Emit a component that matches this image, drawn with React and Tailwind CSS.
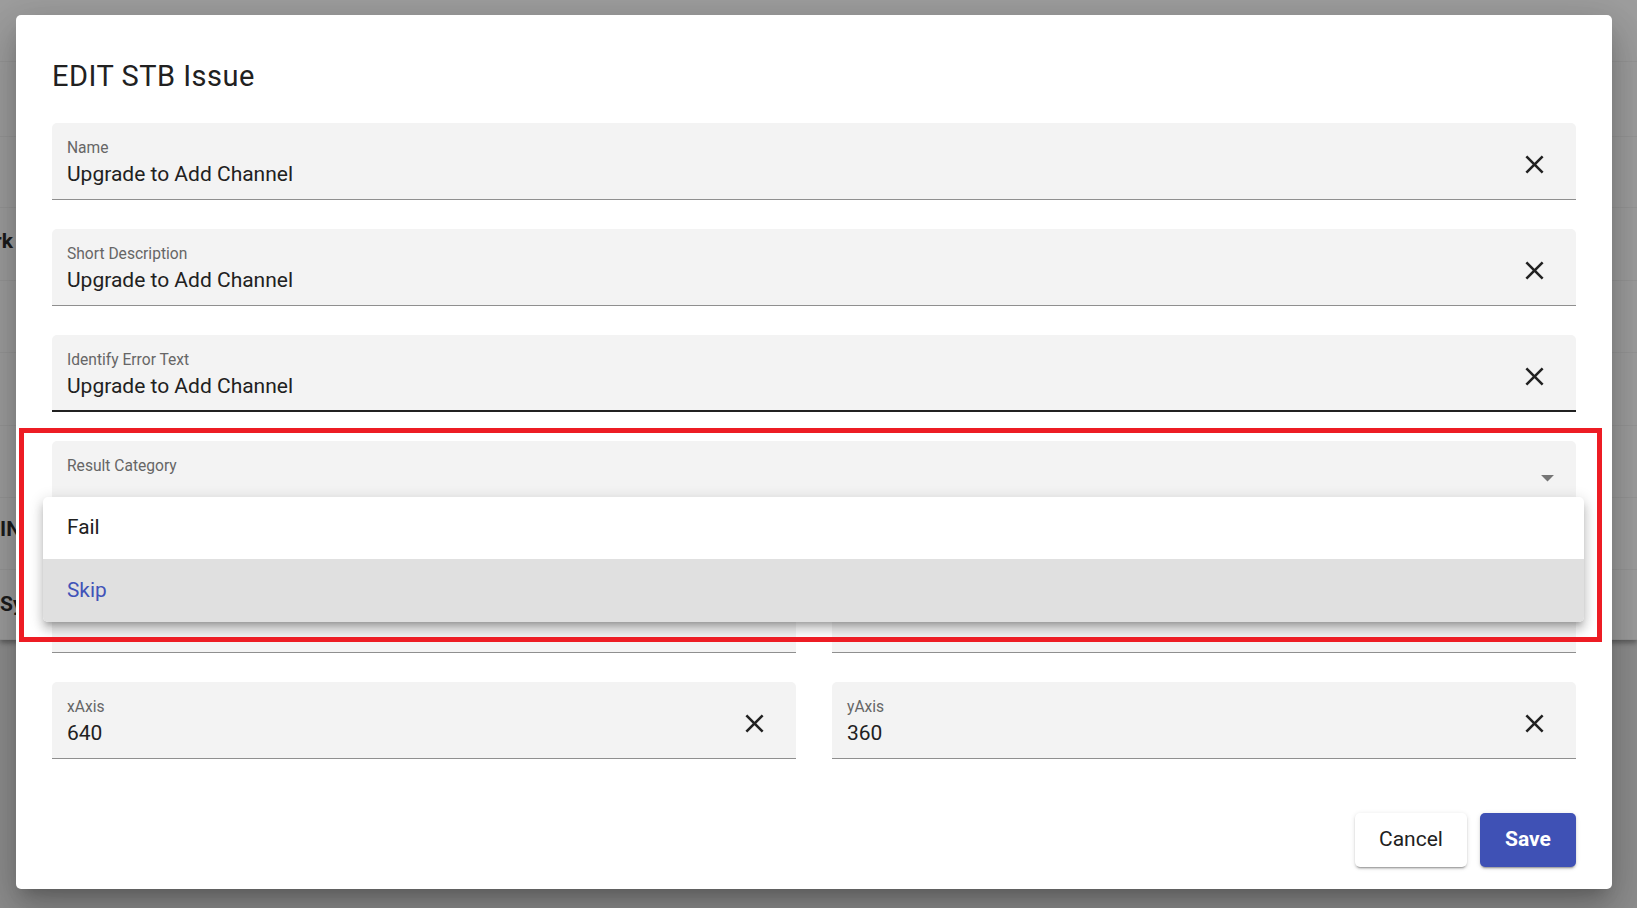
import React from 'react';

const ClearIcon = () => (
  <svg viewBox="0 0 24 24" className="h-[31px] w-[31px] fill-[#212121]">
    <path d="M19 6.41 17.59 5 12 10.59 6.41 5 5 6.41 10.59 12 5 17.59 6.41 19 12 13.41 17.59 19 19 17.59 13.41 12z" />
  </svg>
);

const ArrowDropDown = () => (
  <svg viewBox="0 0 24 24" className="h-[31px] w-[31px] fill-[#757575]">
    <path d="M7 10l5 5 5-5z" />
  </svg>
);

// rows of the page that sits behind the backdrop; only a sliver shows on the left
const BG_ROWS = [
  { h: 'h-[62px]' },
  { h: 'h-[75px]' },
  { h: 'h-[71px]' },
  { h: 'h-[73px]', text: 'Network', align: 'end', pad: 'pb-[5px]' },
  { h: 'h-[72px]' },
  { h: 'h-[73px]' },
  { h: 'h-[72px]' },
  { h: 'h-[72px]', text: 'INFO', align: 'start', pad: 'pb-[7px]' },
  { h: 'h-[70px]', text: 'System', align: 'start', pad: 'pt-[0px]' }
];

const FilledField = ({ label, value, clearable = true, active = false }) => (
  <div
    className={`flex h-[77px] items-start rounded-t-[5px] bg-[#f3f3f3] pl-[15px] pr-[26px] ${
      active ? 'border-b-2 border-[#212121]' : 'border-b border-[#8f8f8f]'
    }`}
  >
    <div className="min-w-0 flex-1 pt-[17px]">
      {label && <p className="text-[15.6px] leading-[16px] text-[#666666]">{label}</p>}
      {value && <p className="mt-[6px] truncate text-[21px] leading-[24px] text-[#212121]">{value}</p>}
    </div>
    {clearable && (
      <div className="mt-[26px] shrink-0">
        <ClearIcon />
      </div>
    )}
  </div>
);

export default function App() {
  return (
    <div className="relative h-[908px] w-[1637px] overflow-hidden bg-[#8e8e8e] font-['Roboto',sans-serif]">
      {/* page behind the backdrop */}
      <div className="flex flex-col bg-[#9e9e9e] shadow-[0_3px_5px_rgba(0,0,0,0.35)]">
        {BG_ROWS.map((row, i) => (
          <div key={i} className={`${row.h} flex items-center border-b border-[#979797]`}>
            {row.text && (
              <div
                className={`flex w-[16px] overflow-hidden ${row.pad} ${
                  row.align === 'end' ? 'justify-end pr-[3px]' : 'justify-start'
                }`}
              >
                <span className="whitespace-nowrap text-[21px] font-bold text-[#1c1c1c]">{row.text}</span>
              </div>
            )}
          </div>
        ))}
      </div>

      {/* Dialog */}
      <div className="absolute left-[16px] top-[15px] h-[874px] w-[1596px] rounded-[5px] bg-white px-[36px] pt-[44px] shadow-[0_11px_15px_-7px_rgba(0,0,0,0.2),0_24px_38px_3px_rgba(0,0,0,0.14),0_9px_46px_8px_rgba(0,0,0,0.12)]">
        <h2 className="text-[29px] font-normal leading-[34px] tracking-[0.5px] text-[#212121]">EDIT STB Issue</h2>

        <div className="mt-[30px] flex flex-col gap-[29px]">
          <FilledField label="Name" value="Upgrade to Add Channel" />
          <FilledField label="Short Description" value="Upgrade to Add Channel" />
          <FilledField label="Identify Error Text" value="Upgrade to Add Channel" active />

          {/* Select */}
          <div className="flex h-[77px] items-start rounded-t-[5px] border-b border-[#8f8f8f] bg-[#f3f3f3] pl-[15px] pr-[13px]">
            <div className="flex-1 pt-[17px]">
              <p className="text-[15.6px] leading-[16px] text-[#666666]">Result Category</p>
            </div>
            <div className="mt-[21px] shrink-0">
              <ArrowDropDown />
            </div>
          </div>

          {/* row hidden under the open menu */}
          <div className="mt-[29px] grid grid-cols-2 gap-[36px]">
            <FilledField clearable={false} />
            <FilledField clearable={false} />
          </div>

          <div className="grid grid-cols-2 gap-[36px]">
            <FilledField label="xAxis" value="640" />
            <FilledField label="yAxis" value="360" />
          </div>
        </div>

        {/* Actions */}
        <div className="mt-[54px] flex justify-end gap-[13px]">
          <button className="h-[54px] w-[112px] rounded-[5px] bg-white text-[21px] text-[#212121] shadow-[0_3px_1px_-2px_rgba(0,0,0,0.2),0_2px_2px_0_rgba(0,0,0,0.14),0_1px_5px_0_rgba(0,0,0,0.12)]">
            Cancel
          </button>
          <button className="h-[54px] w-[96px] rounded-[5px] bg-[#3f51b5] text-[21px] font-bold text-white shadow-[0_3px_1px_-2px_rgba(0,0,0,0.2),0_2px_2px_0_rgba(0,0,0,0.14),0_1px_5px_0_rgba(0,0,0,0.12)]">
            Save
          </button>
        </div>

        {/* Open select menu */}
        <div className="absolute left-[27px] top-[482px] w-[1541px] overflow-hidden rounded-[5px] bg-white shadow-[0_5px_5px_-3px_rgba(0,0,0,0.2),0_8px_10px_1px_rgba(0,0,0,0.14),0_3px_14px_2px_rgba(0,0,0,0.12)]">
          <div className="flex h-[62px] items-center pl-[24px] text-[20.8px] text-[#212121]">Fail</div>
          <div className="flex h-[63px] items-center bg-[#e0e0e0] pl-[24px] text-[20.8px] text-[#4153b8]">Skip</div>
        </div>
      </div>

      {/* annotation box */}
      <div className="absolute left-[19px] top-[428px] h-[214px] w-[1583px] border-[5px] border-[#ed1c24]" />
    </div>
  );
}
